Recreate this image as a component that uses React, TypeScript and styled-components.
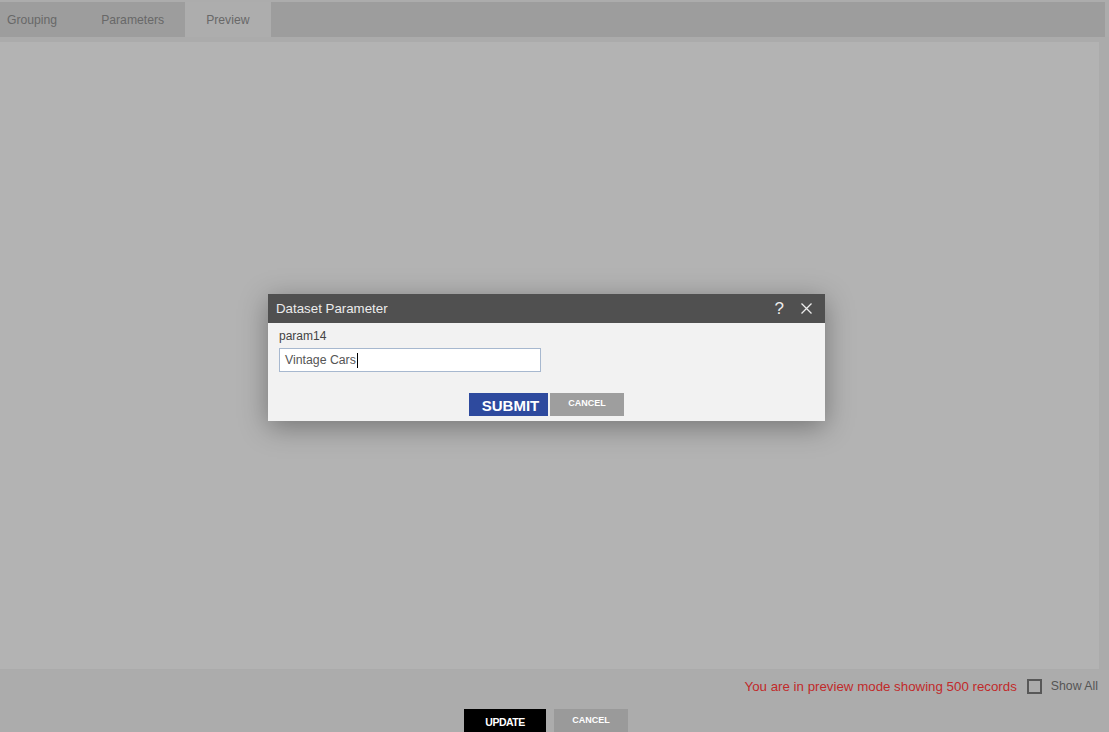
import styled, { createGlobalStyle } from "styled-components";

const GlobalStyle = createGlobalStyle`
  html, body {
    margin: 0;
    padding: 0;
    background: #acacac;
    font-family: "Liberation Sans", Arial, sans-serif;
  }
`;

const Page = styled.div`
  position: relative;
  height: 732px;
  padding-top: 2px;
  box-sizing: border-box;
  display: flex;
  flex-direction: column;
  overflow: hidden;
  background: #acacac;
`;

const TabBar = styled.ul`
  display: flex;
  flex-shrink: 0;
  margin: 0 4px 0 0;
  padding: 0;
  list-style: none;
  height: 35px;
  background: #9d9d9d;
`;

const Tab = styled.li<{ $active?: boolean; $first?: boolean }>`
  display: flex;
  align-items: center;
  padding: ${(p) => (p.$first ? "0 23px 0 7px" : "0 21px")};
  font-size: 12.2px;
  color: #686868;
  background: ${(p) => (p.$active ? "#adadad" : "transparent")};
`;

const Content = styled.div`
  flex-shrink: 0;
  height: 633px;
  padding: 5px 10px 1px 0;
  box-sizing: border-box;
  background: #ababab;
`;

const Panel = styled.div`
  height: 100%;
  background: #b3b3b3;
`;

const Footer = styled.footer`
  flex: 1;
  display: flex;
  flex-direction: column;
  background: #acacac;
`;

const Status = styled.div`
  display: flex;
  justify-content: flex-end;
  align-items: center;
  gap: 10px;
  padding: 7px 11px 0 0;
  height: 18px;
`;

const Notice = styled.span`
  font-size: 13.3px;
  color: #c12a2a;
`;

const CheckLabel = styled.label`
  display: flex;
  align-items: center;
  gap: 9px;
  font-size: 12.3px;
  color: #555;
`;

const Box = styled.span`
  width: 11px;
  height: 11px;
  border: 2px solid #585858;
`;

const Actions = styled.div`
  display: flex;
  justify-content: center;
  gap: 8px;
  margin-top: 14px;
  padding-right: 17px;
`;

const FooterButton = styled.button<{ $primary?: boolean }>`
  height: 28px;
  width: ${(p) => (p.$primary ? "82px" : "74px")};
  border: none;
  padding: ${(p) => (p.$primary ? "0 0 3px" : "0 0 7px")};
  font-family: inherit;
  font-weight: bold;
  font-size: ${(p) => (p.$primary ? "10.5px" : "9px")};
  letter-spacing: ${(p) => (p.$primary ? "-0.5px" : "0")};
  color: #fff;
  background: ${(p) => (p.$primary ? "#000" : "#9a9a9a")};
`;

const Modal = styled.div`
  position: absolute;
  left: 268px;
  top: 294px;
  width: 557px;
  height: 127px;
  background: #f2f2f2;
  box-shadow: 0 6px 26px rgba(0, 0, 0, 0.35);
  display: flex;
  flex-direction: column;
`;

const ModalHeader = styled.div`
  height: 29px;
  display: flex;
  align-items: center;
  justify-content: space-between;
  padding: 0 13px 0 8px;
  background: #505050;
  color: #ececec;
  font-size: 13.3px;
`;

const HeaderTools = styled.div`
  display: flex;
  align-items: center;
  gap: 17px;
  font-size: 17px;
`;

const ModalBody = styled.div`
  padding: 6px 11px 0;
  display: flex;
  flex-direction: column;
`;

const FieldLabel = styled.div`
  font-size: 12px;
  color: #444;
  margin-bottom: 5px;
`;

const Input = styled.div`
  width: 262px;
  height: 24px;
  box-sizing: border-box;
  border: 1px solid #a7b8cf;
  background: #fff;
  display: flex;
  align-items: center;
  padding-left: 5px;
  font-size: 12.3px;
  color: #555;
`;

const Caret = styled.span`
  display: inline-block;
  width: 1px;
  height: 15px;
  background: #000;
  margin-left: 1px;
`;

const DialogActions = styled.div`
  display: flex;
  justify-content: center;
  gap: 2px;
  margin-top: 21px;
`;

const DialogButton = styled.button<{ $primary?: boolean }>`
  height: 23px;
  width: ${(p) => (p.$primary ? "79px" : "74px")};
  border: none;
  padding: ${(p) => (p.$primary ? "2px 0 0 4px" : "0 0 4px")};
  font-family: inherit;
  font-weight: bold;
  font-size: ${(p) => (p.$primary ? "15px" : "9px")};
  color: #fff;
  background: ${(p) => (p.$primary ? "#2e4a9e" : "#9e9e9e")};
`;

export default function App() {
  return (
    <Page>
      <GlobalStyle />
      <TabBar>
        <Tab $first>Grouping</Tab>
        <Tab>Parameters</Tab>
        <Tab $active>Preview</Tab>
      </TabBar>
      <Content>
        <Panel />
      </Content>
      <Footer>
        <Status>
          <Notice>You are in preview mode showing 500 records</Notice>
          <CheckLabel>
            <Box />
            Show All
          </CheckLabel>
        </Status>
        <Actions>
          <FooterButton $primary>UPDATE</FooterButton>
          <FooterButton>CANCEL</FooterButton>
        </Actions>
      </Footer>
      <Modal>
        <ModalHeader>
          <span>Dataset Parameter</span>
          <HeaderTools>
            <span>?</span>
            <svg width="11" height="11" viewBox="0 0 11 11">
              <path d="M0.5 0.5L10.5 10.5M10.5 0.5L0.5 10.5" stroke="#ececec" strokeWidth="1.3" />
            </svg>
          </HeaderTools>
        </ModalHeader>
        <ModalBody>
          <FieldLabel>param14</FieldLabel>
          <Input>
            Vintage Cars
            <Caret />
          </Input>
          <DialogActions>
            <DialogButton $primary>SUBMIT</DialogButton>
            <DialogButton>CANCEL</DialogButton>
          </DialogActions>
        </ModalBody>
      </Modal>
    </Page>
  );
}
